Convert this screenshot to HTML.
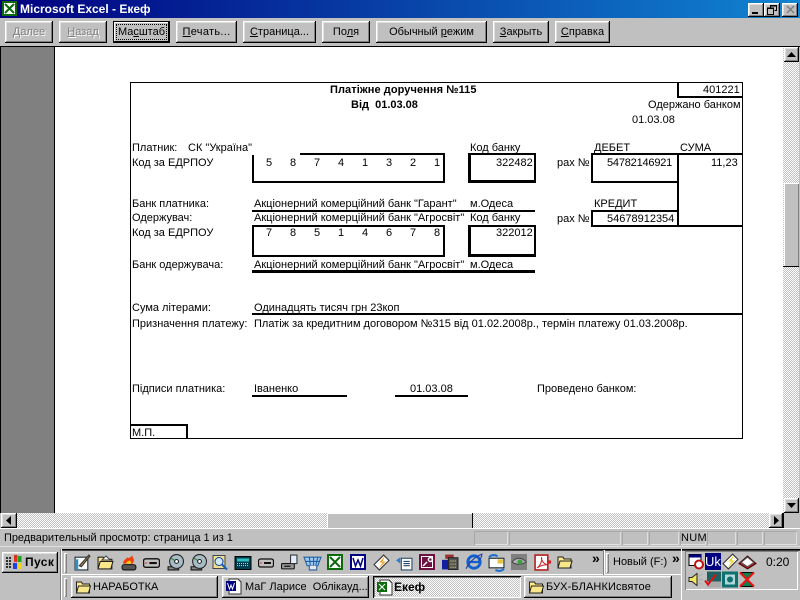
<!DOCTYPE html>
<html><head><meta charset="utf-8"><style>
html,body{margin:0;padding:0;background:#c0c0c0}
#r{position:relative;width:800px;height:600px;overflow:hidden;background:#c0c0c0;font:11px "Liberation Sans",sans-serif;color:#000}
#r div,#r span.a,#r svg.a{position:absolute}
.t{white-space:nowrap;line-height:13px}
.k{background:#000}
.b{box-sizing:border-box;top:21px;height:22px;text-align:center;line-height:23px;white-space:nowrap;background:#c0c0c0;box-shadow:inset -1px -1px #000,inset 1px 1px #fff,inset -2px -2px #808080,inset 2px 2px #dfdfdf}
.d{color:#808080;text-shadow:1px 1px #fff}
.tb{box-sizing:border-box;top:576px;height:22px;line-height:23px;white-space:nowrap;font-size:11px;padding-left:19px;background:#c0c0c0;box-shadow:inset -1px -1px #000,inset 1px 1px #fff,inset -2px -2px #808080,inset 2px 2px #dfdfdf}
.dth{background:repeating-conic-gradient(#c0c0c0 0 25%,#fff 0 50%) 0 0/2px 2px}
.p{box-sizing:border-box;top:531px;height:14px;box-shadow:inset 1px 1px #a8a8a8,inset -1px -1px #dfdfdf}
.g{width:3px;background:#c0c0c0;box-shadow:inset 1px 1px #fff,inset -1px -1px #808080}
.ar{box-sizing:border-box;background:#c0c0c0;box-shadow:inset -1px -1px #000,inset 1px 1px #fff,inset -2px -2px #808080,inset 2px 2px #dfdfdf}
svg.a{overflow:visible}
</style></head><body><div id="r">
<svg width="0" height="0" style="position:absolute"><defs>
<symbol id="f" viewBox="0 0 16 16"><path d="M1 5V3h5l1 2h7v9H1z" fill="#ffe98c" stroke="#222"/><path d="M1 14l2-7h12l-2 7z" fill="#f8e68a" stroke="#222"/></symbol>
<symbol id="dr" viewBox="0 0 16 16"><rect x="0.5" y="4.500" width="15" height="8" rx="2" fill="#c0c0c0" stroke="#111" stroke-width="1.300"/><rect x="6" y="7.500" width="7" height="2" fill="#111"/><rect x="2" y="8" width="2" height="1" fill="#d33"/></symbol>
<symbol id="cd" viewBox="0 0 16 16"><path d="M1 15h10v-3H1z" fill="#888" stroke="#111"/><circle cx="9" cy="7" r="6.500" fill="#a8bcc8" stroke="#222"/><circle cx="9" cy="7" r="1.800" fill="#fff" stroke="#222"/><path d="M4 4l3 2" stroke="#308030"/></symbol>
</defs></svg>

<!-- title bar -->
<div style="left:0;top:0;width:800px;height:18px;background:linear-gradient(90deg,#000080,#1084d0)"></div>
<svg class="a" style="left:2px;top:1px" width="15" height="15"><rect width="15" height="15" fill="#0b6b0b"/><rect x="2" y="2" width="11" height="11" fill="#fff"/><path d="M3 3l9 9M12 3l-9 9" stroke="#0b6b0b" stroke-width="2"/></svg>
<div class="t" style="left:20px;top:1px;color:#fff;font-weight:bold;font-size:12px;line-height:16px">Microsoft Excel - Екеф</div>
<div class="ar" style="left:748px;top:3px;width:16px;height:14px"></div><div class="k" style="left:752px;top:12px;width:6px;height:2px"></div>
<div class="ar" style="left:764px;top:3px;width:16px;height:14px"></div>
<svg class="a" style="left:767px;top:5px" width="10" height="10"><path d="M3.500 2.500V.5h6v5h-2M.5 3.500h6v6h-6z" fill="none" stroke="#000"/><path d="M3 1h7M0 3h7" stroke="#000"/></svg>
<div class="ar" style="left:782px;top:3px;width:16px;height:14px"></div>
<svg class="a" style="left:786px;top:5px" width="9" height="9"><path d="M1 1l7 7M8 1l-7 7" stroke="#808080" stroke-width="1.500"/></svg>

<!-- toolbar -->
<div class="b d" style="left:5px;width:48px"><u>Д</u>алее</div>
<div class="b d" style="left:59px;width:48px"><u>Н</u>азад</div>
<div class="b" style="left:113px;width:57px;box-shadow:inset 0 0 0 1px #000,inset -2px -2px #000,inset 2px 2px #fff">Ма<u>с</u>штаб</div>
<div style="left:116px;top:24px;width:51px;height:16px;box-sizing:border-box;border:1px dotted #000"></div>
<div class="b" style="left:176px;width:61px;letter-spacing:.3px"><u>П</u>ечать...</div>
<div class="b" style="left:243px;width:73px"><u>С</u>траница...</div>
<div class="b" style="left:322px;width:48px">По<u>л</u>я</div>
<div class="b" style="left:376px;width:111px">Обычный <u>р</u>ежим</div>
<div class="b" style="left:493px;width:56px"><u>З</u>акрыть</div>
<div class="b" style="left:555px;width:55px"><u>С</u>правка</div>

<!-- workspace -->
<div class="k" style="left:0;top:46px;width:800px;height:1px"></div>
<div class="k" style="left:0;top:47px;width:1px;height:466px"></div>
<div style="left:1px;top:47px;width:53px;height:466px;background:#808080"></div>
<div class="k" style="left:54px;top:47px;width:1px;height:466px"></div>
<div style="left:55px;top:47px;width:728px;height:466px;background:#fff"></div>

<!-- v scroll -->
<div class="dth" style="left:783px;top:47px;width:16px;height:466px"></div>
<div class="ar" style="left:784px;top:47px;width:15px;height:15px"></div>
<svg class="a" style="left:787px;top:52px" width="9" height="5"><path d="M4.500 0L9 5H0z"/></svg>
<div style="left:784px;top:183px;width:15px;height:83px;box-sizing:border-box;background:#c0c0c0;box-shadow:inset 1px 1px #fff,inset -1px 0 #808080"></div>
<div class="k" style="left:783px;top:266px;width:16px;height:1px"></div>
<div class="ar" style="left:784px;top:498px;width:15px;height:15px"></div>
<svg class="a" style="left:787px;top:503px" width="9" height="5"><path d="M4.500 5L9 0H0z"/></svg>

<!-- h scroll -->
<div class="dth" style="left:1px;top:513px;width:782px;height:15px"></div>
<div class="ar" style="left:1px;top:513px;width:16px;height:15px"></div>
<svg class="a" style="left:6px;top:516px" width="5" height="9"><path d="M0 4.500L5 0V9z"/></svg>
<div style="left:327px;top:513px;width:145px;height:15px;background:#c0c0c0;box-shadow:inset 1px 1px #fff"></div>
<div class="k" style="left:472px;top:513px;width:1px;height:15px"></div>
<div class="ar" style="left:769px;top:513px;width:14px;height:15px"></div>
<svg class="a" style="left:774px;top:516px" width="5" height="9"><path d="M5 4.500L0 0V9z"/></svg>
<div style="left:783px;top:513px;width:17px;height:15px;background:#c0c0c0;box-shadow:inset 1px 0 #000"></div>

<!-- status bar -->
<div style="left:0;top:528px;width:800px;height:1px;background:#fff"></div>
<div class="t" style="left:4px;top:532px;letter-spacing:-.05px">Предварительный просмотр: страница 1 из 1</div>
<div class="p" style="left:474px;width:34px"></div>
<div class="p" style="left:509px;width:112px"></div>
<div class="p" style="left:622px;width:26px"></div>
<div class="p" style="left:649px;width:30px"></div>
<div class="p" style="left:680px;width:26px"></div>
<div class="t" style="left:681px;top:532px;letter-spacing:.3px">NUM</div>
<div class="p" style="left:707px;width:29px"></div>
<div class="p" style="left:737px;width:26px"></div>
<div class="p" style="left:764px;width:33px"></div>

<!-- document frame -->
<div class="k" style="left:130px;top:82px;width:613px;height:1px"></div>
<div class="k" style="left:130px;top:82px;width:1px;height:356px"></div>
<div class="k" style="left:742px;top:82px;width:1px;height:356px"></div>
<div class="k" style="left:130px;top:438px;width:613px;height:1px"></div>
<!-- top-right box -->
<div class="k" style="left:677px;top:82px;width:2px;height:15px"></div>
<div class="k" style="left:677px;top:96px;width:66px;height:2px"></div>
<!-- box 1 -->
<div class="k" style="left:300px;top:153px;width:145px;height:2px"></div>
<div class="k" style="left:252px;top:155px;width:2px;height:28px"></div>
<div class="k" style="left:252px;top:181px;width:193px;height:2px"></div>
<div class="k" style="left:443px;top:153px;width:2px;height:30px"></div>
<!-- code bank 1 -->
<div style="left:468px;top:153px;width:68px;height:30px;box-sizing:border-box;border:2px solid #000;border-left-width:3px;border-bottom-width:3px"></div>
<!-- debit -->
<div class="k" style="left:592px;top:153px;width:151px;height:2px"></div>
<div class="k" style="left:591px;top:153px;width:2px;height:30px"></div>
<div class="k" style="left:591px;top:181px;width:88px;height:2px"></div>
<div class="k" style="left:677px;top:153px;width:2px;height:74px"></div>
<!-- credit -->
<div class="k" style="left:591px;top:210px;width:88px;height:2px"></div>
<div class="k" style="left:591px;top:210px;width:2px;height:17px"></div>
<div class="k" style="left:591px;top:225px;width:152px;height:2px"></div>
<!-- bank lines -->
<div class="k" style="left:252px;top:210px;width:283px;height:2px"></div>
<div class="k" style="left:252px;top:270px;width:283px;height:3px"></div>
<!-- box 2 -->
<div style="left:252px;top:225px;width:193px;height:32px;box-sizing:border-box;border:2px solid #000"></div>
<div style="left:468px;top:225px;width:68px;height:32px;box-sizing:border-box;border:2px solid #000;border-left-width:3px;border-bottom-width:3px"></div>
<!-- lower lines -->
<div class="k" style="left:252px;top:313px;width:491px;height:2px"></div>
<div class="k" style="left:252px;top:395px;width:95px;height:2px"></div>
<div class="k" style="left:395px;top:395px;width:73px;height:2px"></div>
<!-- MP box -->
<div class="k" style="left:130px;top:424px;width:58px;height:2px"></div>
<div class="k" style="left:186px;top:424px;width:2px;height:15px"></div>

<!-- document text -->
<div class="t" style="left:330px;top:84px;font-weight:bold;letter-spacing:.08px">Платіжне доручення №115</div>
<div class="t" style="left:351px;top:99px;font-weight:bold">Від&nbsp; 01.03.08</div>
<div class="t" style="left:703px;top:84px">401221</div>
<div class="t" style="left:648px;top:99px">Одержано банком</div>
<div class="t" style="left:632px;top:114px">01.03.08</div>
<div class="t" style="left:132px;top:142px">Платник:</div>
<div class="t" style="left:188px;top:142px">СК "Україна"</div>
<div class="t" style="left:470px;top:142px">Код банку</div>
<div class="t" style="left:594px;top:142px">ДЕБЕТ</div>
<div class="t" style="left:680px;top:142px">СУМА</div>
<div class="t" style="left:132px;top:157px">Код за ЕДРПОУ</div>
<div class="t" style="left:266px;top:157px">5</div><div class="t" style="left:290px;top:157px">8</div><div class="t" style="left:314px;top:157px">7</div><div class="t" style="left:338px;top:157px">4</div><div class="t" style="left:362px;top:157px">1</div><div class="t" style="left:386px;top:157px">3</div><div class="t" style="left:410px;top:157px">2</div><div class="t" style="left:434px;top:157px">1</div>
<div class="t" style="left:496px;top:157px">322482</div>
<div class="t" style="left:557px;top:157px">рах №</div>
<div class="t" style="left:607px;top:157px;letter-spacing:-.2px">54782146921</div>
<div class="t" style="left:711px;top:157px">11,23</div>
<div class="t" style="left:132px;top:198px">Банк платника:</div>
<div class="t" style="left:254px;top:198px">Акціонерний комерційний банк "Гарант"</div>
<div class="t" style="left:470px;top:198px">м.Одеса</div>
<div class="t" style="left:594px;top:198px">КРЕДИТ</div>
<div class="t" style="left:132px;top:212px">Одержувач:</div>
<div class="t" style="left:254px;top:212px">Акціонерний комерційний банк "Агросвіт"</div>
<div class="t" style="left:470px;top:212px">Код банку</div>
<div class="t" style="left:557px;top:213px">рах №</div>
<div class="t" style="left:607px;top:213px">54678912354</div>
<div class="t" style="left:132px;top:227px">Код за ЕДРПОУ</div>
<div class="t" style="left:266px;top:227px">7</div><div class="t" style="left:290px;top:227px">8</div><div class="t" style="left:314px;top:227px">5</div><div class="t" style="left:338px;top:227px">1</div><div class="t" style="left:362px;top:227px">4</div><div class="t" style="left:386px;top:227px">6</div><div class="t" style="left:410px;top:227px">7</div><div class="t" style="left:434px;top:227px">8</div>
<div class="t" style="left:496px;top:227px">322012</div>
<div class="t" style="left:132px;top:259px">Банк одержувача:</div>
<div class="t" style="left:254px;top:259px">Акціонерний комерційний банк "Агросвіт"</div>
<div class="t" style="left:470px;top:259px">м.Одеса</div>
<div class="t" style="left:132px;top:302px">Сума літерами:</div>
<div class="t" style="left:254px;top:302px">Одинадцять тисяч грн 23коп</div>
<div class="t" style="left:132px;top:318px">Призначення платежу:</div>
<div class="t" style="left:254px;top:318px">Платіж за кредитним договором №315 від 01.02.2008р., термін платежу 01.03.2008р.</div>
<div class="t" style="left:132px;top:383px">Підписи платника:</div>
<div class="t" style="left:254px;top:383px">Іваненко</div>
<div class="t" style="left:410px;top:383px">01.03.08</div>
<div class="t" style="left:537px;top:383px">Проведено банком:</div>
<div class="t" style="left:132px;top:427px">М.П.</div>

<!-- taskbar -->
<div style="left:0;top:546px;width:800px;height:54px;background:#c0c0c0"></div>
<div style="left:0;top:546px;width:800px;height:1px;background:#dfdfdf"></div>
<div style="left:60px;top:549px;width:740px;height:1px;background:#000"></div>
<div style="left:60px;top:550px;width:740px;height:1px;background:#404040"></div>
<div style="left:60px;top:549px;width:1px;height:51px;background:#808080"></div>
<div style="left:61px;top:549px;width:1px;height:51px;background:#fff"></div>
<div style="left:61px;top:574px;width:620px;height:1px;background:#fff"></div>
<div style="left:681px;top:549px;width:1px;height:51px;background:#fff"></div>
<div class="ar" style="left:2px;top:552px;width:56px;height:21px"></div>
<svg class="a" style="left:6px;top:555px" width="16" height="15"><rect x="8" y="0" width="3.500" height="7" fill="#e03020"/><rect x="12" y="1" width="3.500" height="6" fill="#20a020"/><rect x="7" y="8" width="4" height="6" fill="#2040e0"/><rect x="12" y="8" width="3.500" height="6" fill="#f0d020"/><path d="M0 3h6M0 6h6M0 9h6M0 12h6" stroke="#000" stroke-width="1.500" stroke-dasharray="2 1"/></svg>
<div class="t" style="left:25px;top:556px;font-weight:bold;font-size:12px;letter-spacing:.4px">Пуск</div>

<div class="g" style="left:64px;top:553px;height:20px"></div>
<div class="g" style="left:64px;top:578px;height:19px"></div>

<!-- quick launch icons -->
<svg class="a" style="left:74px;top:554px" width="17" height="17" viewBox="0 0 16 16"><rect x="1" y="3" width="12" height="12" fill="#fff" stroke="#123"/><path d="M1 15V5h3v10z" fill="#3090c0"/><path d="M5 11l9-10 1 1-8 10z" fill="#b08040" stroke="#333"/></svg>
<svg class="a" style="left:97px;top:554px" width="17" height="17"><use href="#f"/><path d="M5 6l4-4 4 4z" fill="#fff" stroke="#444"/></svg>
<svg class="a" style="left:121px;top:554px" width="17" height="17" viewBox="0 0 16 16"><rect x="1" y="10" width="13" height="5" rx="2" fill="#555" stroke="#111"/><path d="M2 9c0-4 3-4 4-6 1 1 2 1 5-2-1 3 3 3 0 8z" fill="#f04010"/><path d="M5 9c0-2 2-2 3-3 1 1 2 1 1 3z" fill="#fc0"/></svg>
<svg class="a" style="left:143px;top:554px" width="17" height="17"><use href="#dr"/></svg>
<svg class="a" style="left:167px;top:554px" width="17" height="17"><use href="#cd"/></svg>
<svg class="a" style="left:190px;top:554px" width="17" height="17"><use href="#cd"/></svg>
<svg class="a" style="left:212px;top:554px" width="16" height="17" viewBox="0 0 16 16"><path d="M1 1h12v13H1z" fill="#f0e090" stroke="#444"/><circle cx="7" cy="7" r="4" fill="#d0e8f0" stroke="#1040a0"/><path d="M10 10l5 5" stroke="#1060c0" stroke-width="2"/></svg>
<svg class="a" style="left:235px;top:554px" width="16" height="17" viewBox="0 0 16 16"><rect y="2" width="16" height="13" fill="#004050" stroke="#000"/><rect x="2" y="4" width="12" height="3" fill="#30c0c0"/><path d="M2 9h12M2 11h12" stroke="#80e0e0" stroke-dasharray="1 1"/></svg>
<svg class="a" style="left:258px;top:554px" width="16" height="17"><use href="#dr"/></svg>
<svg class="a" style="left:281px;top:554px" width="17" height="17" viewBox="0 0 16 16"><rect x="0.500" y="9" width="12" height="5" rx="1" fill="#999" stroke="#111"/><rect x="3" y="11" width="6" height="1" fill="#000"/><rect x="9" y="1" width="6" height="8" fill="#e0f0ff" stroke="#333"/></svg>
<svg class="a" style="left:304px;top:554px" width="17" height="17" viewBox="0 0 16 16"><path d="M0 3h16l-3 8H3z" fill="#a0c8f0" stroke="#2060a0"/><path d="M5 3l1 8M9 3v8M13 3l-2 8M1 7h14" stroke="#2060a0"/><path d="M5 11v4h7v-4" fill="#e8e8f0" stroke="#2060a0"/></svg>
<svg class="a" style="left:327px;top:554px" width="16" height="16"><rect width="16" height="16" fill="#0b6b0b"/><rect x="2" y="2" width="12" height="12" fill="#fff"/><path d="M3 3l10 10M13 3L3 13" stroke="#0b6b0b" stroke-width="2"/></svg>
<svg class="a" style="left:350px;top:554px" width="16" height="16"><rect width="16" height="16" fill="#000080"/><rect x="2" y="2" width="12" height="12" fill="#fff"/><path d="M3 4l2.500 8 2.500-6 2.500 6L13 4" fill="none" stroke="#000080" stroke-width="1.500"/></svg>
<svg class="a" style="left:373px;top:554px" width="17" height="17" viewBox="0 0 16 16"><path d="M1 10L10 1l5 5-9 9z" fill="#fff" stroke="#333"/><path d="M11 2L6 8h3l-4 6 7-7H9z" fill="#f0a020"/></svg>
<svg class="a" style="left:396px;top:554px" width="17" height="17" viewBox="0 0 16 16"><rect x="5" y="4" width="10" height="11" fill="#fff" stroke="#246"/><path d="M7 7h6M7 9h6M7 11h6" stroke="#246"/><path d="M0 6l4-3v6z" fill="#3080d0"/></svg>
<svg class="a" style="left:419px;top:554px" width="16" height="16"><rect width="16" height="16" fill="#701040"/><rect x="2" y="2" width="12" height="12" fill="#fff"/><rect x="3" y="3" width="10" height="10" fill="#701040"/><path d="M4 12l4-4M10 7a2 2 0 1 0-.1-.1" stroke="#fff" fill="none" stroke-width="1.500"/></svg>
<svg class="a" style="left:442px;top:553px" width="17" height="18" viewBox="0 0 16 16"><rect x="3" y="1" width="8" height="4" fill="#a03030"/><rect y="6" width="6" height="9" fill="#1020a0"/><rect x="6" y="4" width="9" height="11" fill="#555" stroke="#222"/><path d="M8 7h5M8 10h5M8 13h5" stroke="#e0c060" stroke-dasharray="1 1"/></svg>
<svg class="a" style="left:465px;top:553px" width="18" height="18" viewBox="0 0 16 16"><circle cx="8" cy="8" r="5.500" fill="none" stroke="#1060d0" stroke-width="2.500"/><path d="M3 8h10" stroke="#1060d0" stroke-width="2"/><path d="M1 14C3 9 9 3 15 1c0 3-2 5-3 6" fill="none" stroke="#2040a0"/></svg>
<svg class="a" style="left:488px;top:554px" width="17" height="17" viewBox="0 0 16 16"><rect x="1" y="4" width="14" height="9" fill="#fff" stroke="#123"/><rect x="9" y="5" width="5" height="4" fill="#e8c040"/><path d="M1 3c3-3 6-2 8-1M15 14c-3 3-6 2-8 1" stroke="#2070d0" stroke-width="2" fill="none"/></svg>
<svg class="a" style="left:511px;top:554px" width="16" height="16"><rect width="16" height="16" fill="#808080"/><path d="M1 8c4-5 10-5 14 0-4 3-10 3-14 0z" fill="#b0b0b0" stroke="#404040"/><circle cx="9" cy="8" r="2.500" fill="#40a040"/></svg>
<svg class="a" style="left:534px;top:554px" width="17" height="17" viewBox="0 0 16 16"><rect x="1" y="1" width="12" height="14" fill="#fff" stroke="#b02020" stroke-width="1.500"/><path d="M3 13c3-2 5-7 4-10 0 4 3 7 6 7-3 0-7 1-10 3z" fill="none" stroke="#d02020"/><rect x="13" y="6" width="3" height="3" fill="#d02020"/></svg>
<svg class="a" style="left:557px;top:554px" width="16" height="16"><use href="#f"/></svg>
<div class="t" style="left:592px;top:552px;font-weight:bold;font-size:14px">»</div>
<div style="left:603px;top:550px;width:1px;height:25px;background:#808080"></div>
<div style="left:604px;top:550px;width:1px;height:25px;background:#fff"></div>
<div class="g" style="left:606px;top:553px;height:20px"></div>
<div class="t" style="left:613px;top:556px;font-size:11px">Новый (F:)</div>
<div class="t" style="left:672px;top:552px;font-weight:bold;font-size:14px">»</div>

<!-- task buttons -->
<div class="tb" style="left:71px;width:147px;padding-left:22px">НАРАБОТКА</div>
<svg class="a" style="left:75px;top:579px" width="17" height="16"><use href="#f"/></svg>
<div class="tb" style="left:222px;width:147px;padding-left:23px">МаГ Ларисе&nbsp; Облікауд...</div>
<svg class="a" style="left:226px;top:579px" width="16" height="16"><path d="M3 0h9l3 3v12H3z" fill="#fff" stroke="#333"/><rect y="2" width="10" height="10" fill="#000080"/><path d="M1.500 4l2 6 1.500-4 1.500 4 2-6" fill="none" stroke="#fff"/></svg>
<div class="tb dth" style="left:373px;width:148px;padding-left:21px;font-weight:bold;font-size:12px;box-shadow:inset 1px 1px #000,inset -1px -1px #fff,inset 2px 2px #808080,inset -2px -2px #dfdfdf">Екеф</div>
<svg class="a" style="left:377px;top:580px" width="16" height="16"><path d="M3 0h9l3 3v12H3z" fill="#fff" stroke="#333"/><rect y="2" width="10" height="10" fill="#0b6b0b"/><path d="M2 4l6 6M8 4l-6 6" stroke="#fff"/></svg>
<div class="tb" style="left:524px;width:148px;padding-left:22px;letter-spacing:.1px">БУХ-БЛАНКИсвятое</div>
<svg class="a" style="left:528px;top:579px" width="17" height="16"><use href="#f"/></svg>

<!-- tray -->
<div style="left:685px;top:551px;width:113px;height:39px;box-sizing:border-box;box-shadow:inset 1px 1px #808080,inset -1px -1px #fff"></div>
<svg class="a" style="left:688px;top:553px" width="16" height="17" viewBox="0 0 16 16"><rect x="1" y="1" width="12" height="11" fill="#fff" stroke="#000"/><rect x="1" y="1" width="12" height="3" fill="#000080"/><circle cx="11" cy="11" r="4" fill="#fff" stroke="#c01010" stroke-width="2"/></svg>
<div style="left:705px;top:553px;width:16px;height:17px;background:#000080;color:#fff;font-size:13px;line-height:17px;text-align:center">Uk</div>
<svg class="a" style="left:722px;top:553px" width="17" height="17" viewBox="0 0 16 16"><path d="M1 10L10 1l5 5-9 9z" fill="#fff" stroke="#333"/><path d="M11 2L6 8h3l-4 6 7-7H9z" fill="#f0d020"/></svg>
<svg class="a" style="left:739px;top:555px" width="17" height="15" viewBox="0 0 16 14"><path d="M0 8l8-7 8 7-8 5z" fill="#c02020" stroke="#400"/><path d="M2 7l6-5 6 5-6 4z" fill="#fff" stroke="#555"/></svg>
<div class="t" style="left:766px;top:556px;font-size:12px">0:20</div>
<svg class="a" style="left:688px;top:571px" width="16" height="17" viewBox="0 0 16 16"><path d="M1 6h3l5-4v12L4 10H1z" fill="#f0e860" stroke="#222"/><path d="M11 5l3-2M11 8h4M11 11l3 2" stroke="#aaa"/></svg>
<svg class="a" style="left:705px;top:571px" width="16" height="17" viewBox="0 0 16 16"><rect x="2" y="0" width="14" height="10" fill="#206060"/><rect x="2" y="10" width="14" height="6" fill="#aaa"/><path d="M0 9l3 4 8-10" fill="none" stroke="#e01010" stroke-width="2"/></svg>
<svg class="a" style="left:722px;top:571px" width="16" height="17" viewBox="0 0 16 16"><rect width="16" height="16" fill="#107070"/><rect x="3" y="3" width="10" height="10" fill="#b0d8d8"/><circle cx="8" cy="8" r="3" fill="#107070"/></svg>
<svg class="a" style="left:739px;top:571px" width="16" height="17" viewBox="0 0 16 16"><path d="M2 1h12L8 8l6 7H2l6-7z" fill="#108050" stroke="#000"/><path d="M1 1l14 14M15 1L1 15" stroke="#f01010" stroke-width="2"/></svg>
</div></body></html>
